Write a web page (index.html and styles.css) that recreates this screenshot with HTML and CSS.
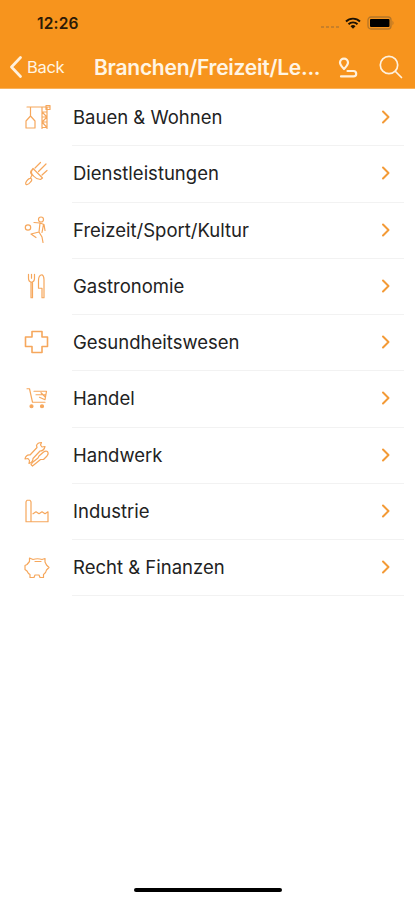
FILE: index.html
```html
<!DOCTYPE html>
<html lang="de">
<head>
  <meta charset="UTF-8" />
  <meta name="viewport" content="width=device-width, initial-scale=1.0" />
  <title>Branchen</title>
  <link rel="stylesheet" href="styles.css">
</head>
<body>
  <header class="header">
    <div class="status-bar">
      <span class="time">12:26</span>
      <div class="status-icons">
        <svg class="signal" viewBox="0 0 20 4"><path d="M1 2h3M6 2h3M11 2h3M16 2h3"/></svg>
        <svg class="wifi" viewBox="0 0 16 12">
          <path d="M1 4.500a10 10 0 0 1 14 0M3.500 7.200a6.400 6.400 0 0 1 9 0"/>
          <path class="solid" d="M5.500 9.200a3.600 3.600 0 0 1 5 0L8 11.800z"/>
        </svg>
        <svg class="battery" viewBox="0 0 28 14">
          <rect class="case" x="1" y="1" width="23" height="12" rx="3"/>
          <rect x="3" y="3" width="19.500" height="8" rx="1"/>
          <path class="cap" d="M25.500 4.500q2 2.500 0 5z"/>
        </svg>
      </div>
    </div>
    <nav class="nav-bar">
      <a class="back">
        <svg viewBox="0 0 14 22"><path d="M11.500 1.500 2.500 11l9 9.500"/></svg>
        <span>Back</span>
      </a>
      <h1>Branchen/Freizeit/Le...</h1>
      <svg class="route" viewBox="0 0 20 22">
        <path d="M6 12C3.500 9.500 2 8 2 5.600a4 4 0 0 1 8 0C10 8 8.500 9.500 6 12z"/>
        <path d="M9.500 14h6a2.700 2.700 0 0 1 0 5.400H3"/>
      </svg>
      <svg class="search" viewBox="0 0 24 24"><circle cx="10" cy="10" r="8.700"/><path d="m16.500 16.500 6 6"/></svg>
    </nav>
  </header>

  <ul class="list">
    <li>
      <svg class="icon" viewBox="4 4 36 36"><path d="M12 12h23M15.500 12v9M11 26l4.500-5 4.500 5v7h-9zM27 12v21.500M32 12v21.500M27 17h5M27 22h5M27 27h5M27 32.500h5M27 17l5 5-5 5 5 5.500M31 10.500h4v4h-4z"/></svg>
      <div class="row"><span>Bauen &amp; Wohnen</span><svg class="chevron" viewBox="0 0 10 14"><path d="m2 1.500 5.500 5.500L2 12.500"/></svg></div>
    </li>
    <li>
      <svg class="icon" viewBox="4 5 36 36"><path d="m18 18.500 9.500 9.500-2 1.500c-4-.5-5-1-7-3.500-2-2-3-5-.5-7.500zM20 18l5.500-5.500M23.500 21.500l7.500-7.500M27 25l5-4.500M17.500 20c-3 1-2 3-.5 5l-1.500 3M16 28.500c1.500 1 .5 2.500-.5 3.500-1 1.500-3 3-4.500 2.500-1-1.500.5-3.500 2-5 1-1 2-1.500 3-1z"/></svg>
      <div class="row"><span>Dienstleistungen</span><svg class="chevron" viewBox="0 0 10 14"><path d="m2 1.500 5.500 5.500L2 12.500"/></svg></div>
    </li>
    <li>
      <svg class="icon" viewBox="4 5.500 36 36"><circle cx="26" cy="13" r="2.500"/><circle cx="13" cy="21" r="2.700"/><path d="m19 16 6 .5 4 1.500 1 6M25 16.500l-1 9 3 5 1 5.500M28.500 18l-1.500 8M24 25.500l-8 2 5 3.500"/></svg>
      <div class="row"><span>Freizeit/Sport/Kultur</span><svg class="chevron" viewBox="0 0 10 14"><path d="m2 1.500 5.500 5.500L2 12.500"/></svg></div>
    </li>
    <li>
      <svg class="icon" viewBox="4 5.750 36 36"><path d="M13.500 12v4q0 3.500 3 4 3-.5 3-4v-4M16.500 12v4M16 20v15.500h1.500V20M27 35.500V26h-3.500v-8q0-5 3.500-5.500 2 1 2 5v18z"/></svg>
      <div class="row"><span>Gastronomie</span><svg class="chevron" viewBox="0 0 10 14"><path d="m2 1.500 5.500 5.500L2 12.500"/></svg></div>
    </li>
    <li>
      <svg class="icon plus" viewBox="4 6 36 36"><path d="M17 13.500h10v5.500h5.500v9.500H27v6H17v-6h-6.500V19H17z"/></svg>
      <div class="row"><span>Gesundheitswesen</span><svg class="chevron" viewBox="0 0 10 14"><path d="m2 1.500 5.500 5.500L2 12.500"/></svg></div>
    </li>
    <li>
      <svg class="icon" viewBox="4 6.250 36 36"><path d="M12 15h2.500l3 13.500H30M19 17.500h12.500L30 26M21 21h9.500M24.500 23.500 30 26M26 19l4 4"/><circle class="wheel" cx="16.500" cy="32.500" r="1.500"/><circle class="wheel" cx="27" cy="32.500" r="1.500"/></svg>
      <div class="row"><span>Handel</span><svg class="chevron" viewBox="0 0 10 14"><path d="m2 1.500 5.500 5.500L2 12.500"/></svg></div>
    </li>
    <li>
      <svg class="icon" viewBox="4 6.500 36 36"><path d="M26.500 12q-4 0-5 3l.5 2-7 7.500q-4-.5-5 4l3-.5 1.500 2-.5 3q4-1 4-5l7-7.500q4 0 5-4.500l-3 .5-1.500-2z"/><path d="m24 25.500 4-3.500q2.500-2 4.500-1 1.500 2-.5 4.500l-3.500 3.500h-3l-5.500 4.500-2.500 2-1.500-1.500 2-2.500 5-4z"/></svg>
      <div class="row"><span>Handwerk</span><svg class="chevron" viewBox="0 0 10 14"><path d="m2 1.500 5.500 5.500L2 12.500"/></svg></div>
    </li>
    <li>
      <svg class="icon" viewBox="4 6.750 36 36"><path d="M11 35.500V15.500l1-1.500h3l1 1.500v20M11 35.500h22V25.500l-3 2-3-2-3 2-3-2-3 2"/></svg>
      <div class="row"><span>Industrie</span><svg class="chevron" viewBox="0 0 10 14"><path d="m2 1.500 5.500 5.500L2 12.500"/></svg></div>
    </li>
    <li>
      <svg class="icon" viewBox="4 63 36 36"><path d="M14.500 72 18 73.500q4.500-1.500 9 0l3-1v3.500l1.500 3 2.500 2.500-2.500 2.500q-.5 3-3 4.500v3H25l-1-2.500h-4L19 91.500h-4V88.500q-2-1-3-3.500l-2-1.500v-4l2-1 2.500-3zM20 75.500h6"/></svg>
      <div class="row"><span>Recht &amp; Finanzen</span><svg class="chevron" viewBox="0 0 10 14"><path d="m2 1.500 5.500 5.500L2 12.500"/></svg></div>
    </li>
  </ul>

  <div class="home-indicator"></div>
</body>
</html>
```
FILE: styles.css
```css
:root {
  --orange: #f7941d;
  --icon: #f6a75c;
}

* {
  box-sizing: border-box;
}

body {
  margin: 0;
  height: 900px;
  display: flex;
  flex-direction: column;
  background: #fff;
  color: #222;
  font-family: Inter, "Liberation Sans", sans-serif;
}

svg {
  display: block;
  flex-shrink: 0;
  fill: none;
  stroke-linecap: round;
  stroke-linejoin: round;
}

.header {
  height: 89px;
  background: var(--orange);
  border-bottom: 1px solid #f9b25c;
}

.status-bar {
  height: 45px;
  display: flex;
  align-items: center;
  justify-content: space-between;
  padding: 1px 20px 0 37px;
}

.time {
  color: #2c1b06;
  font-size: 15.5px;
  font-weight: 600;
  letter-spacing: 0.2px;
}

.status-icons {
  display: flex;
  align-items: center;
}

.signal {
  width: 20px;
  height: 4px;
  margin: 8px 5px 0 0;
  stroke: #c98029;
  stroke-width: 2;
  stroke-linecap: butt;
}

.wifi {
  width: 16px;
  height: 12px;
  margin-right: 6px;
  stroke: #1c1204;
  stroke-width: 1.9;
  stroke-linecap: butt;
}

.wifi .solid {
  fill: #1c1204;
  stroke: none;
}

.battery {
  width: 28px;
  height: 14px;
  fill: #000;
}

.battery .case {
  fill: none;
  stroke: #b57527;
  stroke-width: 1.3;
}

.battery .cap {
  fill: #b57527;
}

.nav-bar {
  height: 43px;
  display: flex;
  align-items: center;
  padding: 0 12px 0 9px;
  color: #fff5e4;
}

.nav-bar svg {
  stroke: #fff1dd;
}

.back {
  width: 85px;
  display: flex;
  align-items: center;
  gap: 4px;
  font-size: 16.5px;
  letter-spacing: -0.3px;
}

.back svg {
  width: 14px;
  height: 22px;
  stroke-width: 2.7;
}

h1 {
  width: 244px;
  margin: 0;
  padding-top: 1px;
  font-size: 21px;
  font-weight: 600;
  letter-spacing: -0.25px;
  white-space: nowrap;
}

.route {
  width: 20px;
  height: 22px;
  margin-top: 2px;
  stroke-width: 2.2;
}

.search {
  width: 24px;
  height: 24px;
  margin-left: auto;
  stroke-width: 1.7;
}

.list {
  flex: 1;
  margin: 0;
  padding: 0;
  list-style: none;
}

.list li {
  height: 56.25px;
  display: flex;
  align-items: center;
  padding: 0 11px 0 19px;
}

.icon {
  width: 36px;
  height: 36px;
  margin-right: 17px;
  stroke: var(--icon);
  stroke-width: 1.2;
}

.plus {
  stroke-width: 1.6;
}

.wheel {
  fill: var(--icon);
}

.row {
  flex: 1;
  height: 100%;
  display: flex;
  align-items: center;
  justify-content: space-between;
  padding: 0 13px 0 1px;
  box-shadow: 0 1px #f2f2f2;
  font-size: 18.5px;
}

.chevron {
  width: 10px;
  height: 14px;
  stroke: #f39a36;
  stroke-width: 2;
}

.home-indicator {
  width: 148px;
  height: 4px;
  margin: 0 auto 8px;
  border-radius: 2px;
  background: #000;
}
```
